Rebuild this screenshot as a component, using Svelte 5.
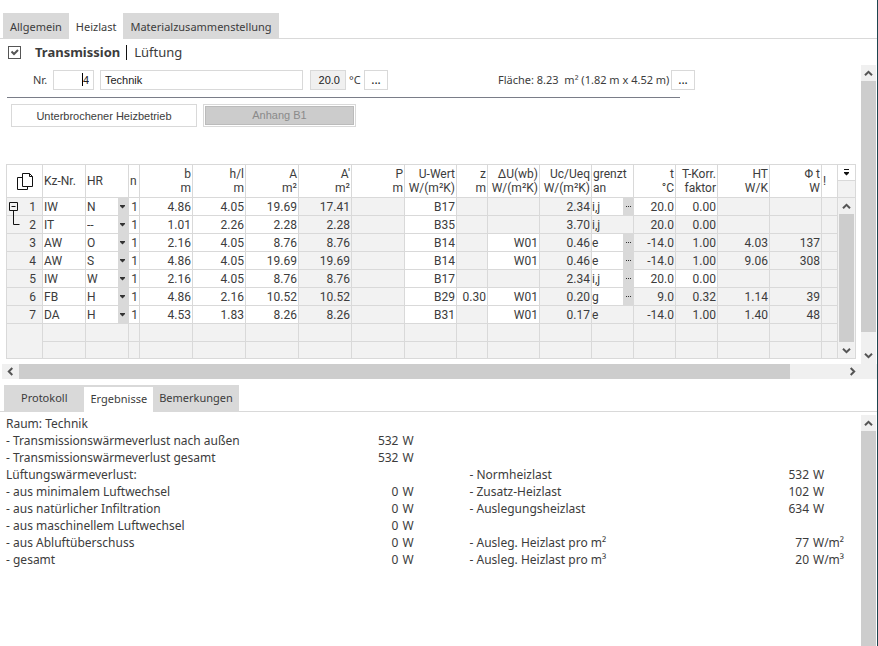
<script>
  const widths = [36, 43, 43, 11, 53, 53, 53, 53, 53, 52, 31, 52, 52, 42, 42, 42, 52, 52, 16];
  const heads = [
    ['b', 'm'], ['h/l', 'm'], ['A', 'm²'], ["A'", 'm²'], ['P', 'm'], ['U-Wert', 'W/(m²K)'],
    ['z', 'm'], ['ΔU(wb)', 'W/(m²K)'], ['Uc/Ueq', 'W/(m²K)'], ['grenzt', 'an'], ['t', '°C'],
    ['T-Korr.', 'faktor'], ['HT', 'W/K'], ['Φ t', 'W']
  ];
  const rows = [
    { kz: 'IW', hr: 'N', v: ['4.86', '4.05', '19.69', '17.41', '', 'B17', '', '', '2.34', 'i,j', '20.0', '0.00', '', ''], more: true, open: [10, 11] },
    { kz: 'IT', hr: '--', v: ['1.01', '2.26', '2.28', '2.28', '', 'B35', '', '', '3.70', 'i,j', '20.0', '0.00', '', ''], more: false, open: [] },
    { kz: 'AW', hr: 'O', v: ['2.16', '4.05', '8.76', '8.76', '', 'B14', '', 'W01', '0.46', 'e', '-14.0', '1.00', '4.03', '137'], more: true, open: [7] },
    { kz: 'AW', hr: 'S', v: ['4.86', '4.05', '19.69', '19.69', '', 'B14', '', 'W01', '0.46', 'e', '-14.0', '1.00', '9.06', '308'], more: true, open: [7] },
    { kz: 'IW', hr: 'W', v: ['2.16', '4.05', '8.76', '8.76', '', 'B17', '', '', '2.34', 'i,j', '20.0', '0.00', '', ''], more: true, open: [10, 11] },
    { kz: 'FB', hr: 'H', v: ['4.86', '2.16', '10.52', '10.52', '', 'B29', '0.30', 'W01', '0.20', 'g', '9.0', '0.32', '1.14', '39'], more: true, open: [6, 7] },
    { kz: 'DA', hr: 'H', v: ['4.53', '1.83', '8.26', '8.26', '', 'B31', '', 'W01', '0.17', 'e', '-14.0', '1.00', '1.40', '48'], more: false, open: [7] }
  ];
  const always = [0, 1, 2, 5];
  const isWhite = (row, i) => always.includes(i) || row.open.includes(i) || (i === 9 && row.more);

  const losses = [
    ['Raum: Technik', ''],
    ['- Transmissionswärmeverlust nach außen', '532'],
    ['- Transmissionswärmeverlust gesamt', '532'],
    ['Lüftungswärmeverlust:', ''],
    ['- aus minimalem Luftwechsel', '0'],
    ['- aus natürlicher Infiltration', '0'],
    ['- aus maschinellem Luftwechsel', '0'],
    ['- aus Abluftüberschuss', '0'],
    ['- gesamt', '0']
  ];
  const loads = [
    ['- Normheizlast', '532', 'W'],
    ['- Zusatz-Heizlast', '102', 'W'],
    ['- Auslegungsheizlast', '634', 'W'],
    ['', '', ''],
    ['- Ausleg. Heizlast pro m²', '77', 'W/m²'],
    ['- Ausleg. Heizlast pro m³', '20', 'W/m³']
  ];
</script>

{#snippet chevron(dir)}
  <svg class="chev {dir}" viewBox="0 0 9 9" width="9" height="9" aria-hidden="true">
    <path d="M1 6.3 4.5 2.8 8 6.3" fill="none" stroke="#555" stroke-width="2" />
  </svg>
{/snippet}

<div class="app">
  <nav class="tabs top">
    <button>Allgemein</button>
    <button class="active">Heizlast</button>
    <button>Materialzusammenstellung</button>
  </nav>

  <header class="modes">
    <input type="checkbox" checked aria-label="Transmission berechnen" />
    <svg class="tick" viewBox="0 0 13 13" width="13" height="13" aria-hidden="true">
      <path d="M3.5 5.5 6 8 10 4" fill="none" stroke="#555" stroke-width="2" />
    </svg>
    <button class="mode on">Transmission</button>
    <span class="bar"></span>
    <button class="mode">Lüftung</button>
  </header>

  <section class="upper">
    <div class="main">
      <div class="room">
        <label for="nr">Nr.</label>
        <span class="nrbox"><input id="nr" class="nr" value="4" /><i class="caret"></i></span>
        <input class="name" value="Technik" aria-label="Raumname" />
        <input class="temp" id="temp" value="20.0" />
        <label class="deg" for="temp">°C</label>
        <button class="dots">...</button>
        <span class="area">Fläche: 8.23&nbsp; m² (1.82 m x 4.52 m)</span>
        <button class="dots">...</button>
      </div>
      <hr />
      <div class="actions">
        <button>Unterbrochener Heizbetrieb</button>
        <button class="off" disabled><span>Anhang B1</span></button>
      </div>

      <div class="gridbox">
        <table>
          <colgroup>
            {#each widths as w}<col style="width:{w}px" />{/each}
          </colgroup>
          <thead>
            <tr>
              <th class="mid">
                <svg viewBox="0 0 18 19" width="18" height="19" aria-label="Kopieren">
                  <path d="M6 5.500H1.500v12h10V15M6.500 1.500h7l3 3v10h-10zM13.500 1.500v3h3" fill="none" stroke="#111" />
                </svg>
              </th>
              <th class="l">Kz-Nr.</th>
              <th class="l">HR</th>
              <th class="l">n</th>
              {#each heads as h, i}
                <th class:l={i === 9}>{h[0]}<br />{h[1]}</th>
              {/each}
              <th class="l">!</th>
            </tr>
          </thead>
          <tbody>
            {#each rows as row, r}
              <tr>
                <td class="idx">
                  {#if r === 0}
                    <svg class="tree" viewBox="0 0 13 30" width="13" height="30" aria-hidden="true">
                      <path d="M.5.5h8v8h-8zM2.500 4.500h4M4.500 8.500v14h6" fill="none" stroke="#111" />
                    </svg>
                  {/if}
                  {r + 1}
                </td>
                <td class="w l">{row.kz}</td>
                <td class="w pick">
                  <div class="sel">
                    <select aria-label="Himmelsrichtung {r + 1}"><option>{row.hr}</option></select>
                    <svg viewBox="0 0 10 17" width="10" height="17" aria-hidden="true"><path d="M2 7h5v1l-2.500 2.500L2 8z" fill="#333" /></svg>
                  </div>
                </td>
                <td class="w n">1</td>
                {#each row.v as value, i}
                  <td class:w={isWhite(row, i)} class:l={i === 9} class:pick={i === 9}>
                    {#if i === 9}
                      <div class="adj"><span>{value}</span>{#if row.more}<button aria-label="Auswahl">
                        <svg viewBox="0 0 7 2" width="7" height="2"><path d="M1 .5h1m1 0h1m1 0h1" stroke="#333" /></svg>
                      </button>{/if}</div>
                    {:else}{value}{/if}
                  </td>
                {/each}
                <td></td>
              </tr>
            {/each}
            <tr><td class="open"></td>{#each widths.slice(1) as _}<td></td>{/each}</tr>
            <tr class="last">{#each widths as _}<td></td>{/each}</tr>
          </tbody>
        </table>
        <div class="rail">
          <div class="railhead">
            <button class="menu" aria-label="Spalten">
              <svg viewBox="0 0 7 7" width="7" height="7"><path d="M1 0h5v1H1zM1 3h5v1L3.500 6.500 1 4z" fill="#111" /></svg>
            </button>
          </div>
          <div class="vbar">
            <button aria-label="Nach oben">{@render chevron('up')}</button>
            <div class="thumb"></div>
            <button aria-label="Nach unten">{@render chevron('down')}</button>
          </div>
        </div>
      </div>
    </div>
    <div class="vbar outer">
      <button aria-label="Nach oben">{@render chevron('up')}</button>
      <div class="thumb"></div>
      <button class="tall" aria-label="Nach unten">{@render chevron('down')}</button>
    </div>
  </section>

  <div class="hbar">
    <button aria-label="Nach links">{@render chevron('left')}</button>
    <div class="hthumb"></div>
    <div class="htrack"></div>
    <button aria-label="Nach rechts">{@render chevron('right')}</button>
  </div>

  <nav class="tabs bottom">
    <button class="wide">Protokoll</button>
    <button class="active">Ergebnisse</button>
    <button>Bemerkungen</button>
  </nav>

  <section class="lower">
    <dl class="losses">
      {#each losses as [name, value]}
        <dt>{name}</dt>
        <dd>{value}</dd>
        <dd class="unit">{value ? 'W' : ''}</dd>
      {/each}
    </dl>
    <dl class="loads">
      {#each loads as [name, value, unit]}
        <dt>{name}</dt>
        <dd>{value}</dd>
        <dd class="unit">{unit}</dd>
      {/each}
    </dl>
    <div class="vbar outer">
      <button aria-label="Nach oben">{@render chevron('up')}</button>
      <div class="thumb"></div>
    </div>
  </section>
</div>

<style>
  :global(body) { margin: 0; background: #fff; }
  .app {
    box-sizing: border-box;
    min-height: 100vh;
    display: flex;
    flex-direction: column;
    border-right: 1px solid #1d4650;
    padding-top: 13px;
    font: 11px/16px 'Noto Sans', sans-serif;
    color: #3c3c3c;
    background: #fff;
  }
  .app *, .app *::before { box-sizing: border-box; }
  button, input, select { font: inherit; color: inherit; margin: 0; padding: 0; border: 0; border-radius: 0; background: none; }
  svg { display: block; flex: none; }

  .tabs { display: flex; border-bottom: 1px solid #d9d9d9; }
  .tabs button { background: #d9d9d9; white-space: nowrap; }
  .tabs .active { background: #fff; margin-bottom: -1px; }
  .tabs.top { padding-left: 3px; height: 26px; }
  .tabs.top button { padding: 2px 7px 0; }
  .tabs.bottom { margin-top: 6px; padding-left: 4px; height: 27px; }
  .tabs.bottom button { padding: 0 6px; }
  .tabs.bottom .wide { padding: 0 17px; }
  .tabs.bottom .active { border-top: 2px solid #d9d9d9; padding-bottom: 2px; }

  .modes { display: grid; grid-template-columns: 13px auto 1px auto 1fr; align-items: center; height: 26px; padding-left: 8px; font-size: 13px; line-height: 20px; }
  .modes input { appearance: none; width: 13px; height: 13px; border: 1px solid #555; grid-area: 1 / 1; }
  .modes .tick { grid-area: 1 / 1; pointer-events: none; }
  .mode.on { font-weight: 700; padding: 0 6px 0 14px; }
  .mode:not(.on) { padding-left: 7px; }
  .bar { width: 1px; height: 15px; background: #111; }

  .upper { display: flex; }
  .main { flex: 1; min-width: 0; padding: 5px 5px 5px 6px; }
  .room { display: flex; align-items: center; height: 20px; padding-left: 27px; white-space: nowrap; }
  .room input, .room .dots { height: 20px; border: 1px solid #d9d9d9; color: #222; }
  .room input, .actions button { font-family: 'Liberation Sans', sans-serif; }
  .room label { width: 20px; }
  .nrbox { position: relative; margin-right: 6px; }
  .nr { width: 41px; text-align: right; padding-right: 4px; display: block; }
  .caret { position: absolute; right: 11px; top: 3px; width: 1px; height: 13px; background: #000; }
  .name { width: 203px; padding-left: 4px; margin-right: 7px; }
  .temp { width: 36px; background: #f0f0f0; text-align: right; padding-right: 5px; }
  .room .deg { width: 18px; padding-left: 3px; }
  .dots { width: 24px; font-size: 12px; }
  .area { margin-left: 110px; width: 173px; }
  hr { margin: 7px 0 0 1px; width: 673px; height: 1px; border: 0; background: #7a7d88; }
  .actions { display: flex; gap: 6px; margin: 6px 0 37px 5px; }
  .actions button { width: 186px; height: 23px; border: 1px solid #d9d9d9; }
  .actions .off { width: 153px; padding: 1px; color: #8a8a8a; }
  .off span { display: block; height: 19px; line-height: 17px; border: 1px solid #bbb; background: #ccc; }

  .gridbox { display: flex; border: 1px solid #d9d9d9; }
  table { flex: 1; min-width: 0; table-layout: fixed; border-collapse: separate; border-spacing: 0; font: 12px/14px 'Roboto', sans-serif; background: #f2f2f2; }
  th, td { border-right: 1px solid #d9d9d9; border-bottom: 1px solid #d9d9d9; padding: 0 1px; text-align: right; white-space: nowrap; }
  th { height: 33px; font-weight: 400; background: #fff; }
  td { height: 18px; }
  td.w { background: #fff; }
  .l { text-align: left; }
  .mid svg { margin: 0 auto; }
  .idx { position: relative; padding-right: 6px; }
  .tree { position: absolute; left: 2px; top: 4px; z-index: 1; }
  .open { border-bottom: 0; }
  .last td { height: 16px; border-bottom: 0; }
  td.pick { padding: 0; }
  .sel { display: grid; grid-template-columns: 1fr 10px; height: 17px; }
  .sel select { appearance: none; grid-area: 1 / 1 / 2 / 3; width: 100%; padding-left: 1px; background: linear-gradient(#d9d9d9, #d9d9d9) right / 10px 100% no-repeat; }
  .sel svg { grid-area: 1 / 2; pointer-events: none; }
  .adj { display: flex; justify-content: space-between; align-items: center; height: 17px; }
  .adj button { width: 10px; height: 17px; background: #d9d9d9; display: grid; place-items: center; }

  .rail { width: 17px; display: flex; flex-direction: column; background: #f2f2f2; }
  .railhead { height: 33px; border-bottom: 1px solid #d9d9d9; }
  .menu { width: 100%; height: 16px; background: #fff; border-bottom: 1px solid #d9d9d9; display: grid; place-items: center; }
  .vbar { display: flex; flex-direction: column; flex: 1; background: #f0f0f0; }
  .rail .vbar { margin: 0 1px; }
  .vbar button { height: 16px; display: grid; place-items: center; }
  .thumb { flex: 1; background: #cdcdcd; }
  .outer { flex: none; width: 16px; border-right: 1px solid #fff; }
  .upper .outer .tall { height: 32px; padding-top: 14px; }
  .down { transform: rotate(180deg); }
  .left { transform: rotate(-90deg); }
  .right { transform: rotate(90deg); }
  .hbar { display: flex; height: 15px; margin-left: 2px; padding-right: 16px; background: #f0f0f0; }
  .hbar button { width: 17px; display: grid; place-items: center; }
  .hthumb { flex: 770; background: #cdcdcd; }
  .htrack { flex: 54; }

  .lower { flex: 1; display: flex; padding: 3px 0 0 6px; font-size: 12px; line-height: 17px; }
  dl { margin: 0; display: grid; grid-auto-rows: 17px; align-content: start; white-space: nowrap; column-gap: 4px; }
  dd { margin: 0; text-align: right; }
  .losses { grid-template-columns: 1fr auto 12px; flex: 409; }
  .loads { grid-template-columns: 1fr auto 33px; flex: 377; margin: 51px 15px 0 55px; }
  dd.unit { text-align: left; }
</style>
